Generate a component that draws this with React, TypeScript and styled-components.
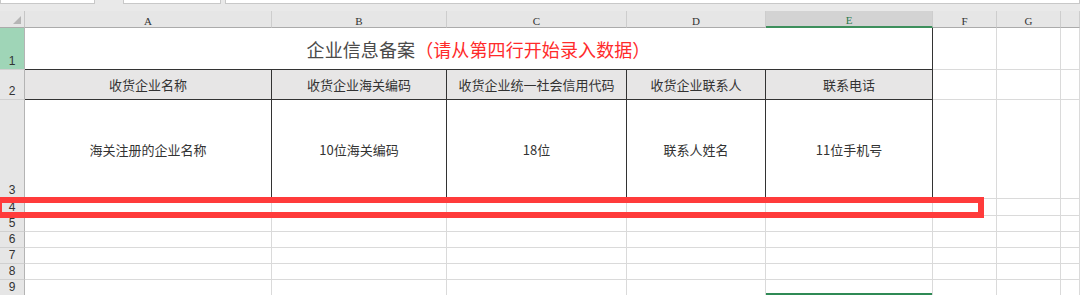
import styled, { createGlobalStyle } from "styled-components";

const GlobalStyle = createGlobalStyle`
  html, body {
    margin: 0;
    padding: 0;
    background: #ffffff;
    overflow: hidden;
  }
`;

const columns = [
  { key: "A", width: 247 },
  { key: "B", width: 175 },
  { key: "C", width: 180 },
  { key: "D", width: 139 },
  { key: "E", width: 167 },
  { key: "F", width: 64 },
  { key: "G", width: 64 },
  { key: "H", width: 19 },
];

const rowHeights = [42, 30, 99, 17, 16, 16, 16, 16, 16];

const headers = ["收货企业名称", "收货企业海关编码", "收货企业统一社会信用代码", "收货企业联系人", "联系电话"];
const samples = ["海关注册的企业名称", "10位海关编码", "18位", "联系人姓名", "11位手机号"];

const App = () => {
  return (
    <>
      <GlobalStyle />
      <S.Page>
        <S.TopBar>
          <S.InputBox $width={94} />
          <S.InputBox $width={96} $offset={28} />
          <S.InputBox $width={860} $offset={4} />
        </S.TopBar>
        <S.Sheet>
          <S.Grid>
            <S.Corner>
              <S.SelectAll />
            </S.Corner>
            {columns.map((c) => (
              <S.ColHeader key={c.key} $active={c.key === "E"}>
                {c.key === "H" ? "" : c.key}
              </S.ColHeader>
            ))}

            {rowHeights.map((_, r) => {
              const row = r + 1;
              return [
                <S.RowHeader key={`rh${row}`} $active={row === 1}>
                  {row}
                </S.RowHeader>,
                ...(row === 1
                  ? [
                      <S.TitleCell key="title">
                        企业信息备案<S.Hint>（请从第四行开始录入数据）</S.Hint>
                      </S.TitleCell>,
                      ...columns.slice(5).map((c) => <S.Cell key={`1${c.key}`} />),
                    ]
                  : columns.map((c, i) => {
                      if (i < 5 && row === 2) {
                        return (
                          <S.Cell key={`2${c.key}`} $boxed $head>
                            {headers[i]}
                          </S.Cell>
                        );
                      }
                      if (i < 5 && row === 3) {
                        return (
                          <S.Cell key={`3${c.key}`} $boxed>
                            {samples[i]}
                          </S.Cell>
                        );
                      }
                      return <S.Cell key={`${row}${c.key}`} $selTop={row === 9 && c.key === "E"} />;
                    })),
              ];
            })}
          </S.Grid>
          <S.Mark />
        </S.Sheet>
      </S.Page>
    </>
  );
};

export default App;

const S = {
  Page: styled.div`
    width: 1080px;
    height: 295px;
    overflow: hidden;
    background: #e9e9e9;
    font-family: "Noto Sans CJK SC", "Noto Sans", sans-serif;
  `,

  TopBar: styled.div`
    display: flex;
    align-items: flex-start;
    height: 11px;
    background: #e9e9e9;
  `,

  InputBox: styled.div<{ $width: number; $offset?: number }>`
    width: ${(p) => p.$width}px;
    margin-left: ${(p) => p.$offset ?? 0}px;
    height: 3px;
    background: #ffffff;
    border: 1px solid #c8c8c8;
    border-top: none;
  `,

  Sheet: styled.div`
    position: relative;
  `,

  Grid: styled.div`
    display: grid;
    grid-template-columns: 25px ${columns.map((c) => `${c.width}px`).join(" ")};
    grid-template-rows: 17px ${rowHeights.map((h) => `${h}px`).join(" ")};
    background: #ffffff;
  `,

  Corner: styled.div`
    display: flex;
    align-items: flex-end;
    justify-content: flex-end;
    padding: 0 3px 3px 0;
    background: #e6e6e6;
    border-right: 1px solid #c6c6c6;
    border-bottom: 1px solid #ababab;
    box-sizing: border-box;
  `,

  SelectAll: styled.div`
    width: 0;
    height: 0;
    border-left: 8px solid transparent;
    border-bottom: 8px solid #b5b5b5;
  `,

  ColHeader: styled.div<{ $active?: boolean }>`
    display: flex;
    align-items: center;
    justify-content: center;
    padding-top: 3px;
    box-sizing: border-box;
    background: ${(p) => (p.$active ? "#d3d3d3" : "#e6e6e6")};
    border-right: 1px solid #cdcdcd;
    border-bottom: ${(p) => (p.$active ? "2px solid #3d8f5c" : "1px solid #ababab")};
    color: ${(p) => (p.$active ? "#2c7a4b" : "#333333")};
    font-family: "Liberation Serif", serif;
    font-size: 11px;
  `,

  RowHeader: styled.div<{ $active?: boolean }>`
    display: flex;
    align-items: flex-end;
    justify-content: center;
    padding-bottom: 1px;
    box-sizing: border-box;
    background: ${(p) => (p.$active ? "#9fd5b7" : "#e6e6e6")};
    border-right: 1px solid #b4b4b4;
    border-bottom: 1px solid #d0d0d0;
    color: #333333;
    font-family: "Liberation Sans", sans-serif;
    font-size: 12px;
    line-height: 13px;
  `,

  TitleCell: styled.div`
    grid-column: span 5;
    display: flex;
    align-items: center;
    justify-content: center;
    padding-top: 1px;
    box-sizing: border-box;
    border-right: 1px solid #333333;
    border-bottom: 1px solid #333333;
    color: #4a4a4a;
    font-size: 18px;
    letter-spacing: 0.1px;
  `,

  Hint: styled.span`
    color: #ff2b2b;
  `,

  Cell: styled.div<{ $boxed?: boolean; $head?: boolean; $selTop?: boolean }>`
    display: flex;
    align-items: center;
    justify-content: center;
    box-sizing: border-box;
    background: ${(p) => (p.$head ? "#e7e6e6" : "#ffffff")};
    border-right: 1px solid ${(p) => (p.$boxed ? "#333333" : "#dadada")};
    border-bottom: 1px solid ${(p) => (p.$boxed ? "#333333" : "#dadada")};
    box-shadow: ${(p) => (p.$selTop ? "inset 0 -2px 0 #2f8a55" : "none")};
    color: #333333;
    font-size: 13px;
    white-space: nowrap;
  `,

  Mark: styled.div`
    position: absolute;
    left: -4px;
    top: 186px;
    width: 988px;
    height: 21px;
    box-sizing: border-box;
    border: 6px solid #ff3b3b;
  `,
};
